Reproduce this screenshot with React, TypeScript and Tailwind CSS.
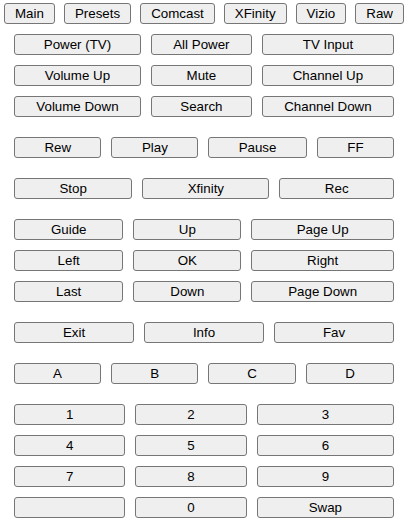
import React from 'react';

const tabs = ['Main', 'Presets', 'Comcast', 'XFinity', 'Vizio', 'Raw'];

// each section is a grid of auto columns; extra width is split evenly
const sections: { cols: string; keys: string[] }[] = [
  {
    cols: 'grid-cols-[auto_auto_auto]',
    keys: ['Power (TV)', 'All Power', 'TV Input', 'Volume Up', 'Mute', 'Channel Up', 'Volume Down', 'Search', 'Channel Down'],
  },
  { cols: 'grid-cols-[auto_auto_auto_auto]', keys: ['Rew', 'Play', 'Pause', 'FF'] },
  { cols: 'grid-cols-[auto_auto_auto]', keys: ['Stop', 'Xfinity', 'Rec'] },
  {
    cols: 'grid-cols-[auto_auto_auto]',
    keys: ['Guide', 'Up', 'Page Up', 'Left', 'OK', 'Right', 'Last', 'Down', 'Page Down'],
  },
  { cols: 'grid-cols-[auto_auto_auto]', keys: ['Exit', 'Info', 'Fav'] },
  { cols: 'grid-cols-[auto_auto_auto_auto]', keys: ['A', 'B', 'C', 'D'] },
  {
    cols: 'grid-cols-[auto_auto_auto]',
    keys: ['1', '2', '3', '4', '5', '6', '7', '8', '9', '', '0', 'Swap'],
  },
];

function RemoteButton({ label }: { label: string }) {
  return (
    <button
      type="button"
      className="h-[21px] px-[10px] border border-[#767676] rounded-[3px] bg-[#efefef] text-black leading-[19px] whitespace-nowrap text-center"
    >
      {label}
    </button>
  );
}

export default function App() {
  return (
    <div className="w-[407px] min-h-[527px] bg-white font-['Liberation_Sans',Arial,sans-serif] text-[13.333px]">
      {/* tabs */}
      <div className="flex justify-between pl-[4px] pr-[3px] pt-[3px]">
        {tabs.map((t) => (
          <RemoteButton key={t} label={t} />
        ))}
      </div>

      <div className="flex flex-col gap-[20px] pl-[14px] pr-[13px] pt-[10px]">
        {sections.map((s, i) => (
          <div key={i} className={`grid ${s.cols} gap-[10px]`}>
            {s.keys.map((k, j) => (
              <RemoteButton key={j} label={k} />
            ))}
          </div>
        ))}
      </div>
    </div>
  );
}
